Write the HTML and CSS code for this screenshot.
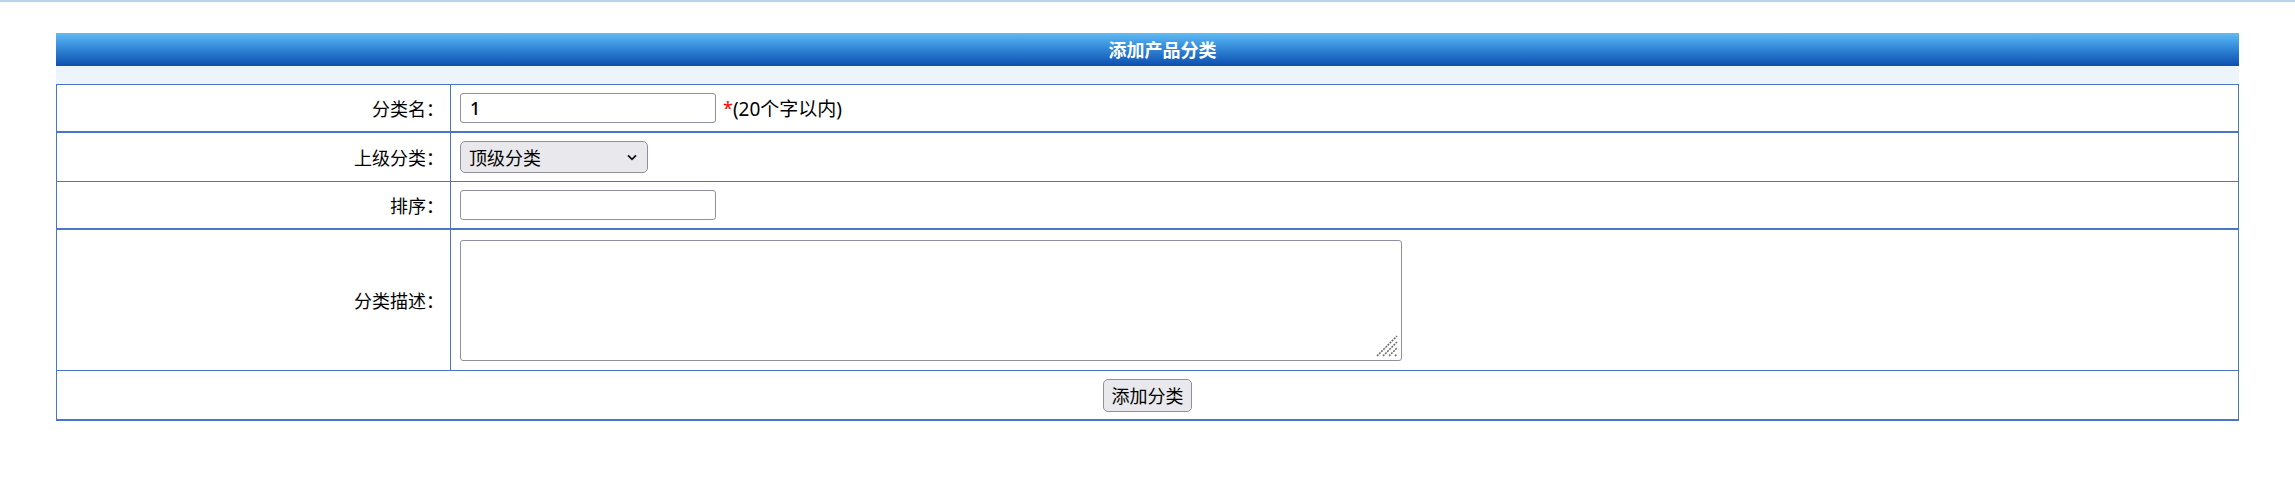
FILE: index.html
```html
<!DOCTYPE html>
<html lang="zh-CN">
<head>
<meta charset="utf-8">
<title>添加产品分类</title>
<link rel="stylesheet" href="styles.css">
</head>
<body>
<div class="page">
  <div class="panel-title">添加产品分类</div>
  <div class="panel-band"></div>
  <table class="form-table">
    <colgroup><col class="col-label"><col></colgroup>
    <tr class="row row-name">
      <td class="label">分类名：</td>
      <td class="field"><input class="text-input" type="text" value="1"><span class="req">*</span><span class="hint">(20个字以内)</span></td>
    </tr>
    <tr class="row row-parent">
      <td class="label">上级分类：</td>
      <td class="field">
        <span class="select-wrap">
          <select class="select"><option>顶级分类</option></select>
          <svg class="chevron" width="10" height="7" viewBox="0 0 10 7"><path d="M1 1.3 L5 5.3 L9 1.3" fill="none" stroke="#111" stroke-width="1.8"/></svg>
        </span>
      </td>
    </tr>
    <tr class="row row-sort">
      <td class="label">排序：</td>
      <td class="field"><input class="text-input" type="text"></td>
    </tr>
    <tr class="row row-desc">
      <td class="label">分类描述：</td>
      <td class="field">
        <span class="textarea-wrap">
          <textarea class="textarea"></textarea>
          <svg class="grip" width="22" height="22" viewBox="0 0 22 22"><g stroke="#6f6f78" stroke-width="1.6" stroke-dasharray="2 1"><path d="M1 21 L21 1"/><path d="M7 21 L21 7"/><path d="M13 21 L21 13"/><path d="M19 21 L21 19"/></g></svg>
        </span>
      </td>
    </tr>
    <tr class="row row-submit">
      <td class="submit" colspan="2"><button class="btn" type="button">添加分类</button></td>
    </tr>
  </table>
</div>
</body>
</html>
```
FILE: styles.css
```css
html, body {
  margin: 0;
  padding: 0;
  background: #ffffff;
}
body {
  border-top: 2px solid #b8d3f0;
  font-family: "Noto Sans", "Noto Sans CJK SC", sans-serif;
  font-size: 18px;
  color: #111;
}
.page {
  margin: 31px 56px 0 56px;
}
.panel-title {
  height: 33px;
  line-height: 33px;
  background: linear-gradient(to bottom, #63bbf3 0%, #45a0e6 25%, #2c7ed1 55%, #0d4fae 100%);
  color: #ffffff;
  font-weight: bold;
  font-size: 18px;
  text-align: center;
  padding-left: 30px;
  font-family: "Noto Sans CJK SC", sans-serif;
}
.panel-band {
  height: 18px;
  background: #edf4fa;
}
.form-table {
  width: 100%;
  border-collapse: collapse;
  border: 1px solid #4877c6;
  table-layout: fixed;
}
.col-label {
  width: 394px;
}
.form-table td {
  border-left: 1px solid #4877c6;
  border-right: 1px solid #4877c6;
  padding: 0;
  vertical-align: middle;
}
.row-name td { height: 46px; border-top: 1px solid #4877c6; }
.row-parent td { height: 48px; border-top: 2px solid #4877c6; }
.row-sort td { height: 46px; border-top: 1px solid #4877c6; }
.row-desc td { height: 140px; border-top: 2px solid #4877c6; }
.row-submit td { height: 48px; border-top: 1px solid #4877c6; border-bottom: 2px solid #4877c6; }
.label {
  text-align: right;
  padding-right: 6px !important;
  font-family: "Noto Sans CJK SC", sans-serif;
  font-size: 18px;
  color: #000;
}
.field {
  padding-left: 9px !important;
  font-size: 18px;
}
.text-input {
  box-sizing: border-box;
  width: 256px;
  height: 30px;
  border: 1px solid #8f8f9d;
  border-radius: 3px;
  padding: 0 9px;
  font-family: "Noto Sans", "Noto Sans CJK SC", sans-serif;
  font-size: 18px;
  font-weight: 500;
  color: #000;
  vertical-align: middle;
  background: #fff;
  outline: none;
}
.req {
  color: #ff0000;
  margin-left: 7px;
  vertical-align: middle;
}
.hint {
  vertical-align: middle;
  font-family: "Noto Sans", "Noto Sans CJK SC", sans-serif;
  font-size: 19px;
  color: #000;
}
.select-wrap {
  position: relative;
  display: inline-block;
  vertical-align: middle;
}
.select {
  -webkit-appearance: none;
  appearance: none;
  box-sizing: border-box;
  width: 188px;
  height: 32px;
  border: 1px solid #8f8f9d;
  border-radius: 5px;
  background: #e9e9ed;
  padding: 0 0 0 8px;
  font-family: "Noto Sans CJK SC", sans-serif;
  font-size: 18px;
  color: #000;
  display: block;
  outline: none;
}
.chevron {
  position: absolute;
  right: 11px;
  top: 13px;
  pointer-events: none;
}
.textarea-wrap {
  position: relative;
  display: inline-block;
  vertical-align: middle;
}
.textarea {
  box-sizing: border-box;
  display: block;
  width: 942px;
  height: 121px;
  border: 1px solid #8f8f9d;
  border-radius: 3px;
  resize: none;
  font-size: 18px;
  outline: none;
}
.grip {
  position: absolute;
  right: 4px;
  bottom: 4px;
  pointer-events: none;
}
.submit {
  text-align: center;
}
.btn {
  box-sizing: border-box;
  width: 89px;
  height: 33px;
  border: 1px solid #8f8f9d;
  border-radius: 5px;
  background: #e9e9ed;
  font-family: "Noto Sans CJK SC", sans-serif;
  font-size: 18px;
  color: #000;
  padding: 0;
  vertical-align: middle;
}
```
